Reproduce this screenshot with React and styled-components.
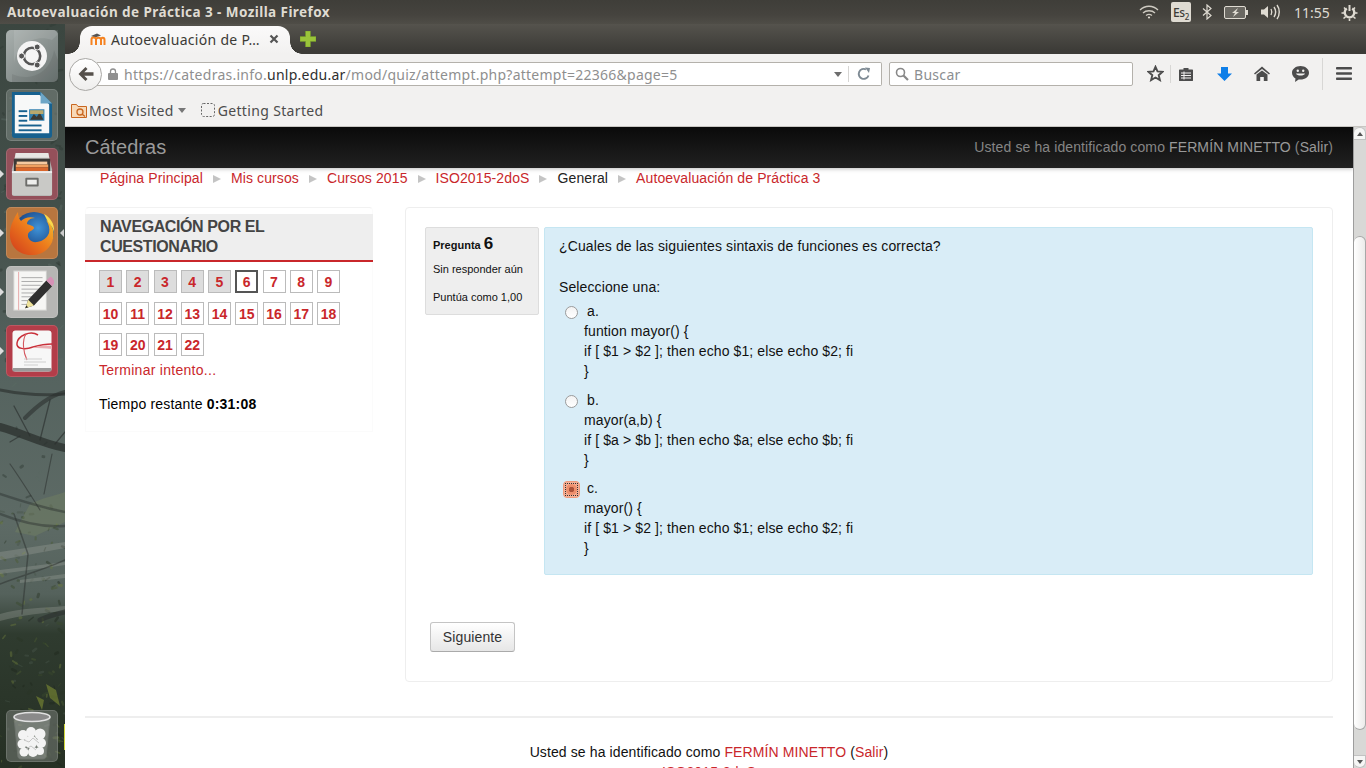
import React from 'react';
import styled, { createGlobalStyle } from 'styled-components';

const Global = createGlobalStyle`
  html, body { margin: 0; padding: 0; height: 100%; overflow: hidden; background: #fff; }
  #root { width: 1366px; height: 768px; overflow: hidden; }
  * { box-sizing: border-box; }
`;

const Desktop = styled.div`
  width: 1366px; height: 768px; display: flex; flex-direction: column; overflow: hidden;
  font-family: "Liberation Sans", Arial, sans-serif; font-size: 14px; color: #000;
`;

/* top panel */
const Panel = styled.div`
  height: 24px; flex: none; display: flex; align-items: center; padding: 0 0 0 7px;
  background: linear-gradient(#3f3e39, #45433e 60%, #4f4d47);
  color: #dfdbd2;
`;
const PanelTitle = styled.div`
  font-family: "Noto Sans", sans-serif; font-weight: 700; font-size: 13.5px; letter-spacing: 0.43px; flex: 1; white-space: nowrap;
`;
const Indicators = styled.div`
  display: flex; align-items: center; height: 24px; color: #dfdbd2;
`;
const IndicatorSlot = styled.div`
  width: ${p => p.$w}px; flex: none; display: flex; align-items: center; justify-content: center;
`;
const Keyboard = styled.div`
  width: 20px; height: 20px; background: #dfdbd2; color: #3c3b37; border-radius: 2px; font-family: "Noto Sans", sans-serif;
  font-size: 12px; font-weight: 500; display: flex; align-items: center; justify-content: center; letter-spacing: -0.3px;
  sub { font-size: 8px; line-height: 0; vertical-align: -3px; }
`;
const Clock = styled.div`
  font-family: "Noto Sans", sans-serif; font-size: 14px; color: #dfdbd2; width: 38px; margin-left: 14px; white-space: nowrap;
`;

const Body = styled.div`flex: 1; min-height: 0; display: flex;`;

/* launcher */
const Launcher = styled.div`
  width: 65px; flex: none; position: relative; display: flex; flex-direction: column; gap: 7px; padding: 6px 0 6px 6px;
  background: linear-gradient(#3b4640 0, #44504b 200px, #55635f 340px, #5d6a65 500px, #55625c 570px, #2f3b2f 610px, #263024 100%);
  overflow: hidden;
`;
const Wallpaper = styled.svg`position: absolute; left: 0; top: 0; width: 65px; height: 744px; filter: blur(.6px);`;
const Tile = styled.div`
  position: relative; width: 52px; height: 52px; border-radius: 5px; flex: none; display: flex; align-items: center; justify-content: center;
  background: ${p => p.$bg};
  box-shadow: inset 0 0 0 1px rgba(255,255,255,.14);
  ${p => p.$end && 'margin-top: auto;'}
`;
const PipLeft = styled.span`
  position: absolute; left: -6px; top: 22px; width: 0; height: 0;
  border-left: 4px solid #ddd; border-top: 4px solid transparent; border-bottom: 4px solid transparent;
`;
const PipRight = styled.span`
  position: absolute; right: -6px; top: 22px; width: 0; height: 0;
  border-right: 4px solid #ccc; border-top: 4px solid transparent; border-bottom: 4px solid transparent;
`;

/* browser window */
const BrowserWindow = styled.div`flex: 1; min-width: 0; display: flex; flex-direction: column;`;
const TabStrip = styled.div`
  height: 30px; flex: none; display: flex; align-items: flex-end; padding-left: 15px;
  background: linear-gradient(#55534d, #3c3b37 90%);
`;
const Tab = styled.div`
  position: relative; width: 210px; height: 28px; display: flex; align-items: center; padding: 0 0 2px 10px; gap: 5px;
  background: linear-gradient(#fbfafa, #f2f1f0); border-radius: 12px 12px 0 0;
  font-family: "Noto Sans", sans-serif; font-size: 14px; color: #3c3b37; white-space: nowrap;
  &::before, &::after { content: ''; position: absolute; bottom: 0; width: 12px; height: 12px; }
  &::before { left: -12px; background: radial-gradient(circle at 0 0, transparent 11.5px, #f4f3f2 12px); }
  &::after { right: -12px; background: radial-gradient(circle at 100% 0, transparent 11.5px, #f4f3f2 12px); }
`;
const TabText = styled.span`flex: 1; letter-spacing: 0.3px;`;
const TabClose = styled.span`
  width: 10px; height: 10px; margin-right: 11px; display: flex;
`;
const NewTab = styled.div`
  margin: 0 0 4px 10px; align-self: center; display: flex; padding-top: 3px;
`;
const NavBar = styled.div`
  height: 39px; flex: none; display: flex; align-items: center; background: #f2f1f0; padding: 0 0 0 4px; position: relative;
`;
const BackButton = styled.div`
  width: 33px; height: 33px; border-radius: 50%; background: linear-gradient(#fff, #efeeed); border: 1px solid #a9a8a5;
  display: flex; align-items: center; justify-content: center; flex: none; position: relative; z-index: 1; margin-top: 1px;
`;
const UrlBar = styled.div`
  width: 785px; height: 24px; margin-left: -5px; margin-top: 1px; background: #fff; border: 1px solid #b4b1ab; border-left: 0; border-radius: 0 2px 2px 0;
  display: flex; align-items: center; padding-left: 11px; font-family: "Noto Sans", sans-serif; font-size: 14px; color: #8f8f8f; white-space: nowrap; flex: none;
  b { font-weight: 400; color: #2f2f2f; }
`;
const UrlText = styled.span`flex: 1; margin-left: 6px; letter-spacing: 0.25px;`;
const UrlDrop = styled.span`
  width: 0; height: 0; border-top: 5px solid #6d6d6d; border-left: 4px solid transparent; border-right: 4px solid transparent; margin-right: 6px;
`;
const UrlReload = styled.span`
  width: 33px; height: 16px; border-left: 1px solid #d6d5d3; display: flex; align-items: center; justify-content: center; padding-right: 2px;
`;
const SearchBar = styled.div`
  width: 244px; height: 24px; margin-left: 7px; margin-top: 1px; background: #fff; border: 1px solid #b4b1ab; border-radius: 2px; flex: none;
  display: flex; align-items: center; gap: 5px; padding-left: 5px; font-family: "Noto Sans", sans-serif; font-size: 14px; color: #8b8e91; letter-spacing: 0.3px;
`;
const ToolIcons = styled.div`display: flex; align-items: center; margin-left: 12px; height: 32px;`;
const ToolIcon = styled.div`width: ${p => p.$w}px; padding-right: ${p => p.$pr || 0}px; display: flex; justify-content: center; flex: none; position: relative;`;
const ToolSep = styled.div`width: 1px; height: ${p => p.$h}px; background: #d8d7d5; flex: none;`;
const BookmarkBar = styled.div`
  height: 34px; flex: none; display: flex; align-items: center; background: #f2f1f0; border-bottom: 1px solid #c8c6c2; padding: 1px 0 0 6px;
  font-family: "Noto Sans", sans-serif; font-size: 14px; color: #4c4c4c;
`;
const Bookmark = styled.div`
  display: flex; align-items: center; gap: ${p => p.$gap}px; margin-right: 15px; letter-spacing: 0.35px;
`;
const Caret = styled.span`
  width: 0; height: 0; border-top: 5px solid #777; border-left: 4px solid transparent; border-right: 4px solid transparent; margin-left: 2px;
`;

/* page */
const Viewport = styled.div`flex: 1; min-height: 0; display: flex; overflow: hidden;`;
const Page = styled.div`flex: 1; min-width: 0; overflow: hidden; display: flex; flex-direction: column; letter-spacing: .11px;`;
const SiteHeader = styled.div`
  height: 41px; flex: none; display: flex; align-items: center; justify-content: space-between; padding: 0 20px;
  background: linear-gradient(#0a0a0a, #212121); color: #8f8f8f; box-shadow: 0 1px 4px rgba(0,0,0,.25);
`;
const Brand = styled.div`font-size: 20px; color: #9a9a9a; letter-spacing: 0;`;
const Login = styled.div`font-size: 14px; color: #858585; padding-bottom: 1px; span { color: #999; }`;
const Crumbs = styled.div`
  display: flex; align-items: center; height: 20px; margin: 0 0 0 35px; flex: none; color: #c81e1e; white-space: nowrap;
`;
const Crumb = styled.span`color: ${p => p.$plain ? '#222' : '#c9272b'};`;
const CrumbSep = styled.span`
  width: 0; height: 0; border-left: 8px solid #c4c4c4; border-top: 4px solid transparent; border-bottom: 4px solid transparent; margin: 1px 10px 0 10px;
`;
const Columns = styled.div`display: flex; gap: 32px; padding: 19px 20px 0; flex: none; align-items: flex-start;`;
const Sidebar = styled.div`
  width: 288px; flex: none; border: 1px solid #fbfbfb; border-top-color: #f2f2f2; border-radius: 4px 4px 0 0; padding-top: 6px; height: 225px;
`;
const SideHead = styled.h2`
  margin: 0 -1px; background: #eee; border-bottom: 2px solid #c9272b; padding: 3px 15px 4px; font-size: 16px; letter-spacing: -.4px; line-height: 20px; font-weight: 700; color: #444; height: 48px;
`;
const SideBody = styled.div`padding: 8px 13px 0;`;
const QRow = styled.div`display: flex; gap: 4.25px; width: 100%; margin-top: ${p => p.$mt || 0}px;`;
const QBtn = styled.div`
  width: 23px; height: 23px; display: flex; align-items: center; justify-content: center; font-weight: 700; font-size: 14px; color: #c9272b; letter-spacing: 0;
  border: ${p => p.$current ? '2px solid #555' : '1px solid #bbb'}; background: ${p => p.$done ? '#ddd' : '#fff'};
`;
const Finish = styled.div`color: #c9272b; margin-top: 5px; line-height: 18px; letter-spacing: .28px;`;
const Timer = styled.div`margin-top: 16px; line-height: 18px; letter-spacing: .2px; b { font-weight: 700; }`;
const Main = styled.div`
  flex: 1; min-width: 0; height: 475px; border: 1px solid #eee; border-radius: 4px; padding: 19px; display: flex; flex-direction: column;
`;
const QuestionRow = styled.div`display: flex; gap: 5px; align-items: flex-start;`;
const Info = styled.div`
  width: 114px; height: 88px; flex: none; background: #eee; border: 1px solid #ddd; border-radius: 2px; padding: 6px 7px; color: #111; letter-spacing: 0;
`;
const InfoNo = styled.div`
  font-size: 11px; font-weight: 700; line-height: 20px; display: flex; align-items: baseline; gap: 3px; b { font-size: 17px; }
`;
const InfoLine = styled.div`font-size: 11px; line-height: 14px; margin-top: ${p => p.$mt}px;`;
const Content = styled.div`
  flex: 1; height: 348px; background: #d9edf7; border: 1px solid #c5e6f2; border-radius: 2px; padding: 8px 14px; line-height: 20px; color: #111;
`;
const Prompt = styled.div`margin-bottom: 21px;`;
const Lead = styled.div`margin-bottom: 4px;`;
const Answer = styled.div`margin-bottom: ${p => p.$mb}px; padding-left: 6px;`;
const AnswerHead = styled.div`display: flex; align-items: center; height: 20px;`;
const Radio = styled.span`
  width: 13px; height: 13px; border-radius: 50%; border: 1px solid #9b9b9b; background: linear-gradient(#f3f3f3, #fff); margin-right: 9px; margin-top: 2px; flex: none;
`;
const RadioChecked = styled.span`
  width: 17px; height: 17px; margin: 2px 7px 0 -2px; flex: none; border-radius: 4px; background: #f6b096; border: 1px solid #ef9b7c;
  display: flex; align-items: center; justify-content: center;
  i { display: block; width: 11px; height: 11px; background: radial-gradient(circle, #a9523a 0 2.5px, #ee8f6c 3px 5px, #f4a88b 5.5px); outline: 1px dotted #333; }
`;
const AnswerLabel = styled.span``;
const AnswerBody = styled.div`padding-left: 19px;`;
const NextButton = styled.div`
  align-self: flex-start; margin: 47px 0 0 5px; width: 85px; height: 30px; border: 1px solid #c4c4c4; border-bottom-color: #aaa; border-radius: 3px;
  background: linear-gradient(#fff, #e6e6e6); color: #333; display: flex; align-items: center; justify-content: center;
`;
const Rule = styled.div`height: 2px; background: #eee; margin: 34px 20px 0; flex: none;`;
const Footer = styled.div`text-align: center; padding-top: 24px; line-height: 20px; color: #111; a, span { color: #c9272b; }`;

/* scrollbar */
const Scrollbar = styled.div`
  width: 13px; flex: none; display: flex; flex-direction: column; background: #d8d8d6; border-left: 1px solid #9d9d9d;
`;
const ScrollBtn = styled.div`
  height: 13px; flex: none; background: #f6f6f5; display: flex; align-items: center; justify-content: center; border-radius: ${p => p.$down ? '0 0 6px 6px' : '6px 6px 0 0'};
  border: 1px solid #c2c2c2; border-left: 0;
  i { width: 0; height: 0; border-left: 3px solid transparent; border-right: 3px solid transparent;
    ${p => p.$down ? 'border-top: 4px solid #555;' : 'border-bottom: 4px solid #555;'} }
`;
const ScrollTrack = styled.div`flex: 1; min-height: 0; display: flex; flex-direction: column; padding: 96px 0 25px;`;
const ScrollThumb = styled.div`
  flex: 1; border-radius: 6px; background: linear-gradient(90deg, #fff, #ecebea); border: 1px solid #a8a8a8; border-left: 0;
`;

/* drawings */
const UbuntuLogo = () => (
  <svg width="52" height="52" viewBox="0 0 52 52">
    <defs><linearGradient id="ub" x1="0" y1="0" x2="1" y2="1"><stop offset="0" stopColor="#a9b0ae"/><stop offset="1" stopColor="#6e7775"/></linearGradient></defs>
    <rect width="52" height="52" rx="5" fill="url(#ub)"/>
    <path d="M8 34C10 14 30 4 46 10L52 4V0H8z" fill="#fff" opacity=".1"/>
    <path d="M6 44C24 52 44 44 48 20L52 30V52H6z" fill="#000" opacity=".07"/>
    <circle cx="26" cy="26" r="15" fill="#f4f4f4"/>
    <circle cx="26" cy="26" r="8.2" fill="none" stroke="#555" strokeWidth="2.6"/>
    <circle cx="15.6" cy="26" r="3" fill="#555" stroke="#f4f4f4" strokeWidth="1"/>
    <circle cx="31.2" cy="17" r="3" fill="#555" stroke="#f4f4f4" strokeWidth="1"/>
    <circle cx="31.2" cy="35" r="3" fill="#555" stroke="#f4f4f4" strokeWidth="1"/>
  </svg>
);
const WriterIcon = () => (
  <svg width="42" height="50" viewBox="0 0 44 50">
    <path d="M1 1h30l12 12v33a3 3 0 0 1-3 3H4a3 3 0 0 1-3-3z" fill="#17618f"/>
    <path d="M4 4h26l10 10v30H4z" fill="#f7f8f8"/>
    <path d="M31 1l12 12H31z" fill="#6ea6c6"/>
    <g fill="#17618f">
      <rect x="8" y="20" width="9" height="2"/><rect x="8" y="25" width="9" height="2"/><rect x="8" y="30" width="9" height="2"/>
      <rect x="8" y="35" width="24" height="2"/><rect x="8" y="40" width="24" height="2"/>
    </g>
    <rect x="19" y="19" width="16" height="12" fill="#2f7fae"/>
    <path d="M20 30l4-6 3 3 3-5 4 8z" fill="#3c3a33"/>
    <rect x="20" y="20" width="14" height="4" fill="#d9b35c" opacity=".8"/>
  </svg>
);
const FilesIcon = () => (
  <svg width="42" height="44" viewBox="0 0 44 46">
    <path d="M5 1h34l4 17v26a2 2 0 0 1-2 2H3a2 2 0 0 1-2-2V18z" fill="#b9b9b6"/>
    <path d="M5 1h34l1 5H4z" fill="#e7e7e4"/>
    <rect x="3" y="7" width="38" height="13" fill="#3b3936"/>
    <rect x="6" y="10" width="32" height="3" fill="#f5c9a0"/>
    <rect x="5" y="13" width="34" height="3" fill="#f0a060"/>
    <rect x="5" y="16" width="34" height="4" fill="#d9672c"/>
    <rect x="1" y="20" width="42" height="25" fill="#c9c9c6" rx="1"/>
    <rect x="1" y="20" width="42" height="2" fill="#eee"/>
    <rect x="15" y="27" width="14" height="9" rx="1" fill="#6d6d6a"/>
    <rect x="17" y="29" width="10" height="5" fill="#eeeeec"/>
  </svg>
);
const FirefoxIcon = () => (
  <svg width="48" height="46" viewBox="0 0 48 46">
    <defs>
      <radialGradient id="gl" cx=".6" cy=".4" r=".6"><stop offset="0" stopColor="#3f93d8"/><stop offset="1" stopColor="#17407f"/></radialGradient>
      <linearGradient id="fx" x1="1" y1="0" x2="0" y2="1"><stop offset="0" stopColor="#f8c72e"/><stop offset=".5" stopColor="#ec7a1c"/><stop offset="1" stopColor="#d0381c"/></linearGradient>
    </defs>
    <circle cx="26" cy="22" r="20" fill="url(#gl)"/>
    <path d="M10 2c0 4 1 7 3 9 3-3 9-5 14-3-5 0-8 3-8 6 3 1 7 2 7 4s-5 3-6 6c-1 5 4 9 9 8 6-1 10-4 12-9 1-4 0-9-3-13 6 4 9 11 7 19-2 9-11 17-22 16C10 45 1 35 2 23 2 16 6 8 10 2z" fill="url(#fx)"/>
    <path d="M36 4c6 3 11 10 10 18-1-5-4-8-6-10z" fill="#fbd84a"/>
  </svg>
);
const EditorIcon = () => (
  <svg width="44" height="46" viewBox="0 0 46 48">
    <rect x="4" y="2" width="34" height="41" fill="#f6f6f4" stroke="#cfcfcd"/>
    <line x1="9" y1="3" x2="9" y2="43" stroke="#e7a9a9"/>
    <g stroke="#a8a8a8" strokeWidth="1">
      <path d="M12 9h22M12 13h22M12 17h20M12 21h22M12 25h14M12 29h12M12 33h10M12 37h14"/>
    </g>
    <path d="M16 41l3-9 19-20 6 6-19 20z" fill="#2f2f2f"/>
    <path d="M38 12l3-3a2 2 0 0 1 3 0l2 3a2 2 0 0 1 0 3l-2 3z" fill="#d691b6"/>
    <path d="M16 41l3-9 6 6z" fill="#efe39a"/>
    <path d="M16 41l1-3 2 2z" fill="#222"/>
  </svg>
);
const PdfIcon = () => (
  <svg width="40" height="42" viewBox="0 0 40 42">
    <rect x=".5" y=".5" width="39" height="41" rx="3" fill="#f7f7f7"/>
    <rect x=".5" y="38" width="39" height="3.500" rx="1" fill="#9a9a9a"/>
    <path d="M26 5C18 0 6 6 5 13c-1 6 8 7 16 4 7-2 13-3 19-3" fill="none" stroke="#c9303a" strokeWidth="1.500"/>
    <path d="M14 4c-4 6-3 18 1 26" fill="none" stroke="#d4575f" strokeWidth="1.100"/>
    <path d="M20 18c8-3 14-3 20-2v3c-7-1-13-1-20-1z" fill="#e9aeb2"/>
    <path d="M12 29h18M12 32h22M12 35h14" stroke="#cfcfcf"/>
  </svg>
);
const TrashIcon = () => (
  <svg width="44" height="50" viewBox="0 0 44 50">
    <path d="M4 6l4 40a3 3 0 0 0 3 2h22a3 3 0 0 0 3-2l4-40z" fill="#fff" opacity=".2" stroke="#cfcfcf"/>
    <ellipse cx="22" cy="6" rx="18" ry="4.500" fill="#8a8a8a" stroke="#e0e0e0" strokeWidth="1.600"/>
    <g fill="#f3f3f3">
      <circle cx="13" cy="24" r="5"/><circle cx="21" cy="21" r="5"/><circle cx="30" cy="23" r="5.500"/>
      <circle cx="12" cy="33" r="4.500"/><circle cx="21" cy="31" r="6.500"/><circle cx="31" cy="32" r="5"/>
      <circle cx="14" cy="41" r="4.500"/><circle cx="23" cy="41" r="5"/><circle cx="30" cy="40" r="4"/>
    </g>
    <path d="M14 29l5 2 4-4 6 5M16 38l5-3 5 4" stroke="#c6c6c6" fill="none"/>
  </svg>
);

/* Deterministic foliage speckle for the wallpaper */
const makeSpeckle = () => {
  let s = 17;
  const rnd = () => { s = (s * 16807) % 2147483647; return s / 2147483647; };
  const out = [];
  const tones = ['#1e271c', '#3a4a2c', '#4c5c34', '#2a3526', '#6b7a3c', '#47544a'];
  for (let i = 0; i < 420; i++) {
    const y = rnd() * 744;
    const upper = y < 480;
    if (rnd() > (upper ? .35 : 1)) continue;
    const x = rnd() * 65;
    const tone = upper ? (rnd() > .5 ? '#2f3a34' : '#5c6a64') : tones[Math.floor(rnd() * tones.length)];
    const dx = (rnd() - .5) * 9;
    const dy = (rnd() - .5) * 7;
    out.push({ x, y, dx, dy, tone, w: 1 + rnd() * 2 });
  }
  return out;
};
const speckle = makeSpeckle();

const Branches = () => (
  <Wallpaper viewBox="0 0 65 744">
    <g strokeLinecap="round" fill="none">
      {speckle.map((d, i) => (
        <path key={i} d={`M${d.x} ${d.y}l${d.dx} ${d.dy}`} stroke={d.tone} strokeWidth={d.w} opacity=".45" />
      ))}
    </g>
    <path d="M30 480c12-6 24-8 35-12v30l-30 14-20-4z" fill="#8d9a5e" opacity=".22"/>
    <g fill="#aeb0a8" opacity=".28">
      <path d="M0 528l65-10v6l-65 12zM0 546l65-8v3l-65 9z"/>
      <path d="M0 590c20-6 44-6 65-8v5c-22 2-44 4-65 10z"/>
      <path d="M20 556l45-6v4l-45 5z"/>
    </g>
    <g fill="none" stroke="#2b302e" strokeLinecap="round">
      <path d="M0 366c20 4 44 6 65 4" strokeWidth="3" opacity=".65"/>
      <path d="M65 368c-16 4-28 14-40 26" strokeWidth="4" opacity=".6"/>
      <path d="M0 403C20 408 42 420 65 424" strokeWidth="8" opacity=".75"/>
      <path d="M30 412L14 382M40 416l10-40M55 420l10-12M20 412l-10 6" strokeWidth="1.300" opacity=".65"/>
      <path d="M0 490c20 8 42 14 65 12M0 470c24 8 44 14 65 18" strokeWidth="2.500" opacity=".45"/>
      <path d="M10 440c10 14 20 30 30 46M52 430l-8 40" strokeWidth="1.200" opacity=".55"/>
      <path d="M14 490l14 40-6 60M0 560c20-8 44-14 65-24" strokeWidth="1.500" opacity=".5"/>
      <path d="M40 596c8-4 16-6 25-8" strokeWidth="5" opacity=".65"/>
    </g>
    <g fill="#7f8e34" opacity=".6">
      <path d="M46 660l10 6 4 16-10-8zM36 672l8 4-2 10z"/>
    </g>
    <rect x="64" y="700" width="1" height="26" fill="#cfd63a"/>
  </Wallpaper>
);
const Wifi = () => (
  <svg width="20" height="14" viewBox="0 0 20 14" fill="none" stroke="#cfcbc2" strokeWidth="1.300">
    <path d="M1 5C6 0 14 0 19 5M4 8c3-3 9-3 12 0M7 10.500c2-1.500 4-1.500 6 0"/>
    <circle cx="10" cy="12.500" r="1.100" fill="#dfdbd2" stroke="none"/>
  </svg>
);
const Bluetooth = () => (
  <svg width="10" height="16" viewBox="0 0 10 16" fill="none" stroke="#dfdbd2" strokeWidth="1.200">
    <path d="M1 4.500l8 7L5 15V1l4 3.500-8 7"/>
  </svg>
);
const Battery = () => (
  <svg width="24" height="13" viewBox="0 0 24 13">
    <rect x=".5" y=".5" width="21" height="12" rx="1.500" fill="#6a6862" stroke="#dfdbd2"/>
    <rect x="22" y="4" width="2" height="5" fill="#dfdbd2"/>
    <path d="M14 2L8 7h3l-2 4 6-5h-3z" fill="#dfdbd2"/>
  </svg>
);
const Volume = () => (
  <svg width="20" height="16" viewBox="0 0 20 16" fill="none" stroke="#dfdbd2" strokeWidth="1.400">
    <path d="M1 5.500h3L8 2v12L4 10.500H1z" fill="#dfdbd2" stroke="none"/>
    <path d="M11 5c1 2 1 4 0 6M14 3c2 3 2 7 0 10M17 1c3 4 3 10 0 14"/>
  </svg>
);
const Power = () => (
  <svg width="17" height="17" viewBox="0 0 17 17" fill="none" stroke="#dfdbd2">
    <path d="M5.800 4.600a4.800 4.800 0 1 0 5.400 0" strokeWidth="2.400"/>
    <path d="M8.500 1v6" strokeWidth="2"/>
    <path d="M.500 9h2.500M14 9h2.500M2.500 14.500l2-1.600M14.500 14.500l-2-1.600M8.500 14.500v2.500M3 3.500l1.500 1.500M14 3.500L12.500 5" strokeWidth="1.600"/>
  </svg>
);
const MoodleMark = () => (
  <svg width="16" height="16" viewBox="0 0 16 16">
    <path d="M1 5l6-2.500 4 2-6 2z" fill="#555"/>
    <path d="M1.500 14V8.500c0-1.500 1-2 2-2 1.500 0 2.500 1 2.500 2V14M6 9c0-1.500 1-2.300 2.500-2.300 1.500 0 2.500 1 2.500 2.300v5M11 9c0-1.500.8-2.300 1.800-2.300 1 0 1.700 1 1.700 2.300v5" fill="none" stroke="#f58220" strokeWidth="2"/>
  </svg>
);
const CloseX = () => (
  <svg width="10" height="10" viewBox="0 0 10 10" stroke="#555" strokeWidth="2.200"><path d="M1.500 1.500l7 7M8.500 1.500l-7 7"/></svg>
);
const Plus = () => (
  <svg width="16" height="16" viewBox="0 0 16 16">
    <path d="M5.500 0h5v5.500H16v5h-5.500V16h-5v-5.500H0v-5h5.500z" fill="#9ac43a" stroke="#6f9427" strokeWidth=".5"/>
  </svg>
);
const BackArrow = () => (
  <svg width="16" height="14" viewBox="0 0 16 14" fill="#55504b"><path d="M7.500 0l2 2-3.200 3.200H15.500v3.600H6.300L9.500 12l-2 2L.5 7z"/></svg>
);
const Lock = () => (
  <svg width="10" height="12" viewBox="0 0 10 12"><path d="M2.500 5V3.500a2.500 2.500 0 0 1 5 0V5" fill="none" stroke="#8f8f8f" strokeWidth="1.300"/><rect y="5" width="10" height="7" rx="1" fill="#8f8f8f"/></svg>
);
const Reload = () => (
  <svg width="14" height="14" viewBox="0 0 14 14" fill="none"><path d="M11.500 8.500A5 5 0 1 1 9 2.400" stroke="#7e8a94" strokeWidth="1.900"/><path d="M8 .500l5 .5-1 5z" fill="#7e8a94"/></svg>
);
const SearchGlass = () => (
  <svg width="14" height="14" viewBox="0 0 14 14" fill="none" stroke="#888"><circle cx="5.500" cy="5.500" r="4" strokeWidth="1.600"/><path d="M8.500 8.500l4.500 4.500" strokeWidth="2.200"/></svg>
);
const Star = () => (
  <svg width="17" height="17" viewBox="0 0 17 17" fill="none" stroke="#4c4c4c" strokeWidth="1.900"><path d="M8.500 1.800l2 4.600 5 .5-3.800 3.300 1.200 4.900-4.400-2.600-4.400 2.600 1.200-4.900L1.500 6.900l5-.5z"/></svg>
);
const Reader = () => (
  <svg width="14" height="14" viewBox="0 0 14 14"><path d="M1 2.500h3.500V1h5v1.500H13a.8.8 0 0 1 1 .8v9.900a.8.8 0 0 1-1 .8H1a.8.8 0 0 1-1-.8V3.300a.8.8 0 0 1 1-.8z" fill="#4c4c4c"/><path d="M2 6h10M2 8.500h10M2 11h10M5 4.500v8" stroke="#f2f1f0"/></svg>
);
const Download = () => (
  <svg width="15" height="14" viewBox="0 0 15 14"><path d="M4 0h7v6.500h4L7.500 14 0 6.500h4z" fill="#0f7fe8"/></svg>
);
const Home = () => (
  <svg width="16" height="15" viewBox="0 0 16 15" fill="#4c4c4c"><path d="M8 .500l8 7-1 1L8 3 1 8.500l-1-1z"/><path d="M2.500 8.500L8 4.500l5.500 4V15H9.800v-4H6.200v4H2.500z"/></svg>
);
const Chat = () => (
  <svg width="17" height="16" viewBox="0 0 17 16"><path d="M8.500 0C13 0 17 2.800 17 6.800s-4 6.800-8.500 6.800c-.6 0-1.200 0-1.800-.1L3 16l.5-3.500C1.400 11.300 0 9.300 0 6.800 0 2.800 4 0 8.500 0z" fill="#4c4c4c"/><path d="M4 7.500c1 2.800 8 2.800 9 0z" fill="#f2f1f0"/><circle cx="5.800" cy="4.800" r="1.200" fill="#f2f1f0"/><circle cx="11.200" cy="4.800" r="1.200" fill="#f2f1f0"/></svg>
);
const Hamburger = () => (
  <svg width="16" height="13" viewBox="0 0 16 13" fill="#4c4c4c"><rect width="16" height="2.600" rx=".8"/><rect y="5.200" width="16" height="2.600" rx=".8"/><rect y="10.400" width="16" height="2.600" rx=".8"/></svg>
);
const BookmarkFolder = () => (
  <svg width="16" height="15" viewBox="0 0 16 15"><path d="M.500 1.500h5l1.500 2h8.500v11H.500z" fill="#f7d9b8" stroke="#c9661f"/><circle cx="9" cy="9" r="3" fill="none" stroke="#c9661f" strokeWidth="1.300"/><path d="M11 11l3 2.500" stroke="#c9661f" strokeWidth="1.400"/></svg>
);
const DashedPage = () => (
  <svg width="14" height="14" viewBox="0 0 14 14" fill="none" stroke="#666" strokeDasharray="2 1.500"><rect x=".5" y=".5" width="13" height="13" rx="2"/></svg>
);

const Nums = ({ items }) => items.map(n => (
  <QBtn key={n} $done={n <= 5} $current={n === 6}>{n}</QBtn>
));

const answers = [
  { k: 'a.', lines: ['funtion mayor() {', 'if [ $1 > $2 ]; then echo $1; else echo $2; fi', '}'], mb: 9 },
  { k: 'b.', lines: ['mayor(a,b) {', 'if [ $a > $b ]; then echo $a; else echo $b; fi', '}'], mb: 8 },
  { k: 'c.', lines: ['mayor() {', 'if [ $1 > $2 ]; then echo $1; else echo $2; fi', '}'], mb: 0, checked: true },
];

const crumbs = ['Página Principal', 'Mis cursos', 'Cursos 2015', 'ISO2015-2doS', 'General', 'Autoevaluación de Práctica 3'];

export default function App() {
  return (
    <Desktop>
      <Global />
      <Panel>
        <PanelTitle>Autoevaluación de Práctica 3 - Mozilla Firefox</PanelTitle>
        <Indicators>
          <IndicatorSlot $w={22}><Wifi /></IndicatorSlot>
          <IndicatorSlot $w={42}><Keyboard><span>Es<sub>2</sub></span></Keyboard></IndicatorSlot>
          <IndicatorSlot $w={10}><Bluetooth /></IndicatorSlot>
          <IndicatorSlot $w={48}><Battery /></IndicatorSlot>
          <IndicatorSlot $w={20}><Volume /></IndicatorSlot>
          <Clock>11:55</Clock>
          <IndicatorSlot $w={34}><Power /></IndicatorSlot>
        </Indicators>
      </Panel>
      <Body>
        <Launcher>
          <Branches />
          <Tile $bg="transparent"><UbuntuLogo /></Tile>
          <Tile $bg="rgba(150,160,155,.4)"><WriterIcon /></Tile>
          <Tile $bg="#94505a"><PipLeft /><FilesIcon /></Tile>
          <Tile $bg="#b8763f"><PipLeft /><PipRight /><FirefoxIcon /></Tile>
          <Tile $bg="#b6b6b4"><PipLeft /><EditorIcon /></Tile>
          <Tile $bg="#b33d49"><PipLeft /><PdfIcon /></Tile>
          <Tile $end $bg="rgba(120,125,120,.55)"><TrashIcon /></Tile>
        </Launcher>
        <BrowserWindow>
          <TabStrip>
            <Tab>
              <MoodleMark />
              <TabText>Autoevaluación de P…</TabText>
              <TabClose><CloseX /></TabClose>
            </Tab>
            <NewTab><Plus /></NewTab>
          </TabStrip>
          <NavBar>
            <BackButton><BackArrow /></BackButton>
            <UrlBar>
              <Lock />
              <UrlText>https://catedras.info.<b>unlp.edu.ar</b>/mod/quiz/attempt.php?attempt=22366&amp;page=5</UrlText>
              <UrlDrop />
              <UrlReload><Reload /></UrlReload>
            </UrlBar>
            <SearchBar><SearchGlass />Buscar</SearchBar>
            <ToolIcons>
              <ToolIcon $w={25} $pr={4}><Star /></ToolIcon>
              <ToolSep $h={18} />
              <ToolIcon $w={31} $pr={1}><Reader /></ToolIcon>
              <ToolIcon $w={44}><Download /></ToolIcon>
              <ToolIcon $w={32}><Home /></ToolIcon>
              <ToolIcon $w={44}><Chat /></ToolIcon>
              <ToolSep $h={32} />
              <ToolIcon $w={42}><Hamburger /></ToolIcon>
            </ToolIcons>
          </NavBar>
          <BookmarkBar>
            <Bookmark $gap={2}><BookmarkFolder />Most Visited <Caret /></Bookmark>
            <Bookmark $gap={3}><DashedPage />Getting Started</Bookmark>
          </BookmarkBar>
          <Viewport>
            <Page>
              <SiteHeader>
                <Brand>Cátedras</Brand>
                <Login>Usted se ha identificado como <span>FERMÍN MINETTO</span> (<span>Salir</span>)</Login>
              </SiteHeader>
              <Crumbs>
                {crumbs.map((c, i) => (
                  <React.Fragment key={c}>
                    {i > 0 && <CrumbSep />}
                    <Crumb $plain={c === 'General'}>{c}</Crumb>
                  </React.Fragment>
                ))}
              </Crumbs>
              <Columns>
                <Sidebar>
                  <SideHead>NAVEGACIÓN POR EL CUESTIONARIO</SideHead>
                  <SideBody>
                    <QRow><Nums items={[1,2,3,4,5,6,7,8,9]} /></QRow>
                    <QRow $mt={9}><Nums items={[10,11,12,13,14,15,16,17,18]} /></QRow>
                    <QRow $mt={8}><Nums items={[19,20,21,22]} /></QRow>
                    <Finish>Terminar intento...</Finish>
                    <Timer>Tiempo restante <b>0:31:08</b></Timer>
                  </SideBody>
                </Sidebar>
                <Main>
                  <QuestionRow>
                    <Info>
                      <InfoNo>Pregunta <b>6</b></InfoNo>
                      <InfoLine $mt={7}>Sin responder aún</InfoLine>
                      <InfoLine $mt={14}>Puntúa como 1,00</InfoLine>
                    </Info>
                    <Content>
                      <Prompt>¿Cuales de las siguientes sintaxis de funciones es correcta?</Prompt>
                      <Lead>Seleccione una:</Lead>
                      {answers.map(a => (
                        <Answer key={a.k} $mb={a.mb}>
                          <AnswerHead>
                            {a.checked ? <RadioChecked><i /></RadioChecked> : <Radio />}
                            <AnswerLabel>{a.k}</AnswerLabel>
                          </AnswerHead>
                          <AnswerBody>
                            {a.lines.map(l => <div key={l}>{l}</div>)}
                          </AnswerBody>
                        </Answer>
                      ))}
                    </Content>
                  </QuestionRow>
                  <NextButton>Siguiente</NextButton>
                </Main>
              </Columns>
              <Rule />
              <Footer>
                <div>Usted se ha identificado como <span>FERMÍN MINETTO</span> (<span>Salir</span>)</div>
                <div><span>ISO2015-2doS</span></div>
              </Footer>
            </Page>
            <Scrollbar>
              <ScrollBtn><i /></ScrollBtn>
              <ScrollTrack><ScrollThumb /></ScrollTrack>
              <ScrollBtn $down><i /></ScrollBtn>
            </Scrollbar>
          </Viewport>
        </BrowserWindow>
      </Body>
    </Desktop>
  );
}
